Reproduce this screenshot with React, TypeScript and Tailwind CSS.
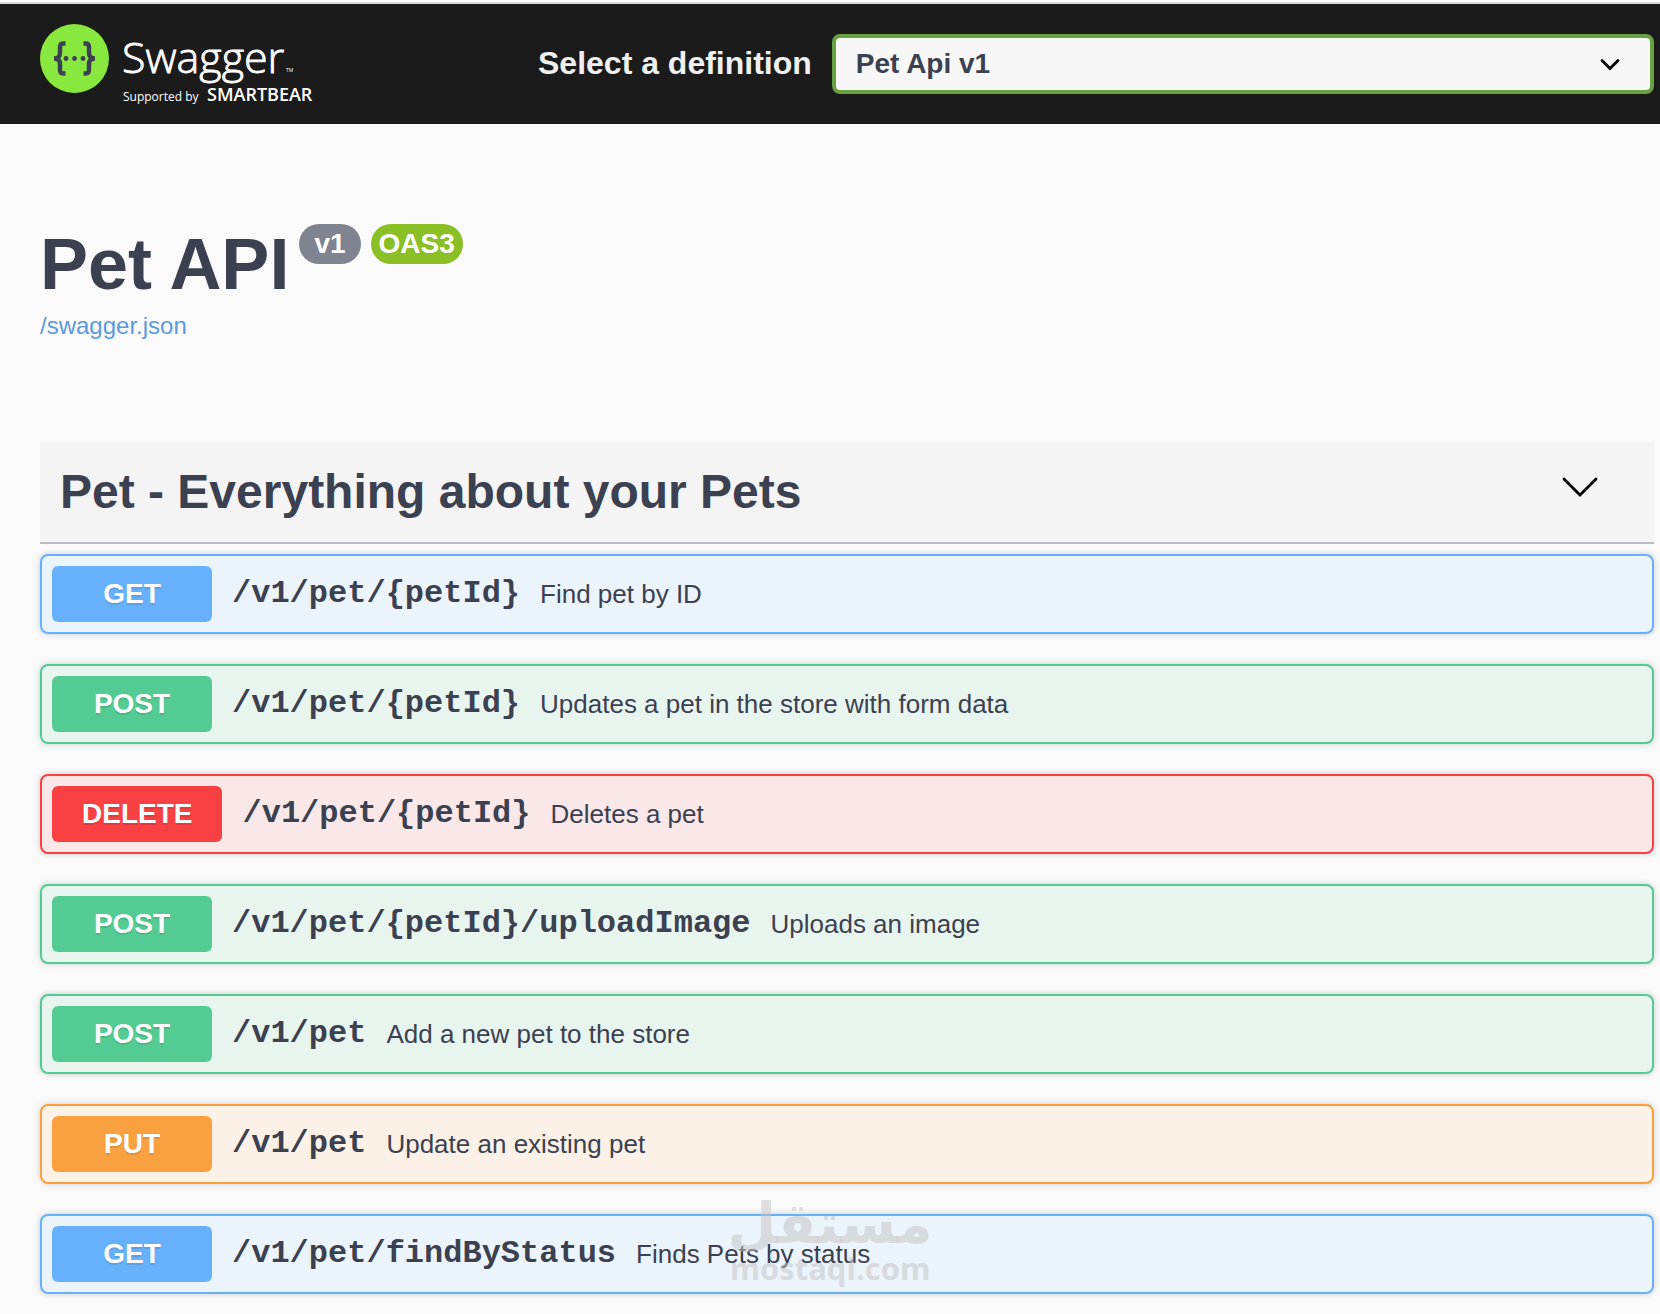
import { useState } from 'react';
import clsx from 'clsx';

type Method = 'GET' | 'POST' | 'PUT' | 'DELETE';

interface Operation {
  method: Method;
  path: string;
  summary: string;
}

const operations: Operation[] = [
  { method: 'GET', path: '/v1/pet/{petId}', summary: 'Find pet by ID' },
  { method: 'POST', path: '/v1/pet/{petId}', summary: 'Updates a pet in the store with form data' },
  { method: 'DELETE', path: '/v1/pet/{petId}', summary: 'Deletes a pet' },
  { method: 'POST', path: '/v1/pet/{petId}/uploadImage', summary: 'Uploads an image' },
  { method: 'POST', path: '/v1/pet', summary: 'Add a new pet to the store' },
  { method: 'PUT', path: '/v1/pet', summary: 'Update an existing pet' },
  { method: 'GET', path: '/v1/pet/findByStatus', summary: 'Finds Pets by status' },
];

const rowStyles: Record<Method, string> = {
  GET: 'border-[#67b0fb] bg-[#ebf3fb]',
  POST: 'border-[#54cb92] bg-[#e8f5ef]',
  PUT: 'border-[#f9a140] bg-[#fbf1e6]',
  DELETE: 'border-[#f94144] bg-[#fae7e7]',
};

const badgeStyles: Record<Method, string> = {
  GET: 'bg-[#67b0fb]',
  POST: 'bg-[#54cb92]',
  PUT: 'bg-[#f9a140]',
  DELETE: 'bg-[#f94144]',
};

function Logo() {
  return (
    <svg width="300" height="88" viewBox="0 -4 300 88" aria-label="Swagger" role="img">
      <circle cx="34.5" cy="34.5" r="34.5" fill="#89e83e" />
      <g fill="none" stroke="#3b4151" strokeWidth="4.4">
        <path d="M25.5 19.5H23.5Q20 19.5 20 23V29Q20 34.5 14 34.5Q20 34.5 20 40V46Q20 49.5 23.5 49.5H25.5" />
        <path d="M43.5 19.5H45.5Q49 19.5 49 23V29Q49 34.5 55 34.5Q49 34.5 49 40V46Q49 49.5 45.5 49.5H43.5" />
      </g>
      <g fill="#3b4151">
        <circle cx="26" cy="34.5" r="2.4" />
        <circle cx="34.5" cy="34.5" r="2.4" />
        <circle cx="43" cy="34.5" r="2.4" />
      </g>
      <g fill="#ffffff" className="font-['Open_Sans','Noto_Sans',sans-serif]">
        <text x="82" y="49" fontSize="43" fontWeight="300" stroke="#ffffff" strokeWidth="0.8">Swagger</text>
        <text x="246" y="48" fontSize="5">TM</text>
        <text x="83" y="77" fontSize="12">Supported by</text>
        <text x="167" y="77" fontSize="18" fontWeight="600">SMARTBEAR</text>
      </g>
    </svg>
  );
}

function Topbar() {
  const [definition, setDefinition] = useState('v1');

  return (
    <header className="flex h-[120px] items-center bg-[#1b1b1b] pl-10 pr-1.5">
      <a href="#" className="w-[498px] shrink-0">
        <Logo />
      </a>
      <form className="flex flex-1 items-center gap-5">
        <label htmlFor="definition" className="shrink-0 pb-0.5 text-[32px] leading-10 font-bold text-[#f0f0f0]">
          Select a definition
        </label>
        <div className="relative flex-1">
          <select
            id="definition"
            value={definition}
            onChange={e => setDefinition(e.target.value)}
            className="block h-[60px] w-full appearance-none rounded-lg border-4 border-[#67a144] bg-[#f7f7f7] px-5 text-[28px] font-bold text-[#3b4151]"
          >
            <option value="v1">Pet Api v1</option>
          </select>
          <svg
            className="pointer-events-none absolute top-1/2 right-8 -translate-y-1/2"
            width="24"
            height="24"
            viewBox="0 0 24 24"
            fill="none"
            stroke="#000"
            strokeWidth="2.8"
            strokeLinecap="round"
          >
            <path d="M4 8.5L12 16.5L20 8.5" />
          </svg>
        </div>
      </form>
    </header>
  );
}

function OperationRow({ method, path, summary }: Operation) {
  return (
    <button
      type="button"
      className={clsx(
        'flex w-full items-center rounded-lg border-2 p-2.5 text-left shadow-[0_0_6px_rgba(0,0,0,0.19)]',
        rowStyles[method]
      )}
    >
      <span
        className={clsx(
          'min-w-[160px] rounded-md px-[30px] py-3 text-center text-[28px] leading-8 font-bold text-white [text-shadow:0_2px_0_rgba(0,0,0,0.1)]',
          badgeStyles[method]
        )}
      >
        {method}
      </span>
      <span className="px-5 font-['Liberation_Mono','Courier_New',monospace] text-[32px] leading-9 font-bold">
        {path}
      </span>
      <span className="flex-1 text-[26px] leading-8">{summary}</span>
    </button>
  );
}

function Watermark() {
  return (
    <div
      aria-hidden="true"
      className="pointer-events-none absolute bottom-[30px] left-1/2 flex -translate-x-1/2 flex-col items-center font-bold text-[#c4c4c4]/50"
    >
      <span dir="rtl" lang="ar" className="font-['DejaVu_Sans',sans-serif] text-[56px] leading-[56px]">
        مستقل
      </span>
      <span className="font-['Open_Sans',sans-serif] text-[31px] leading-8">mostaql.com</span>
    </div>
  );
}

export default function App() {
  const [open, setOpen] = useState(true);

  return (
    <div className="relative bg-[#fafafa] font-['Liberation_Sans',Arial,sans-serif] text-[#3b4151]">
      <div className="h-1 border-b-2 border-[#d6dade] bg-white" />
      <Topbar />

      <main className="pt-[100px] pr-1.5 pb-5 pl-10">
        {/* API info */}
        <div className="flex items-start gap-2.5">
          <h1 className="text-[72px] leading-20 font-bold">Pet API</h1>
          <span className="rounded-full bg-[#808491] px-[15px] text-[28px] leading-10 font-bold text-white">v1</span>
          <span className="rounded-full bg-[#8bbf26] px-2 text-[28px] leading-10 font-bold text-white">OAS3</span>
        </div>
        <a href="/swagger.json" className="mt-2 block w-fit text-[24px] leading-7 text-[#5b9bdc]">
          /swagger.json
        </a>

        {/* Operations */}
        <section className="mt-[102px]">
          <h2 className="border-b-2 border-[#bcbcc2] bg-[#f4f4f4]">
            <button
              type="button"
              aria-expanded={open}
              onClick={() => setOpen(!open)}
              className="flex w-full items-center justify-between py-[23px] pr-[54px] pl-5 text-[48px] leading-[54px] font-bold"
            >
              Pet - Everything about your Pets
              <svg
                className={clsx(!open && '-rotate-90')}
                width="40"
                height="40"
                viewBox="0 0 40 40"
                fill="none"
                stroke="#000"
                strokeWidth="2.8"
                strokeLinecap="round"
              >
                <path d="M4 7L20 23L36 7" />
              </svg>
            </button>
          </h2>
          {open && (
            <div className="mt-2.5 flex flex-col gap-[30px]">
              {operations.map(op => (
                <OperationRow key={op.method + op.path} {...op} />
              ))}
            </div>
          )}
        </section>
      </main>

      <Watermark />
    </div>
  );
}
